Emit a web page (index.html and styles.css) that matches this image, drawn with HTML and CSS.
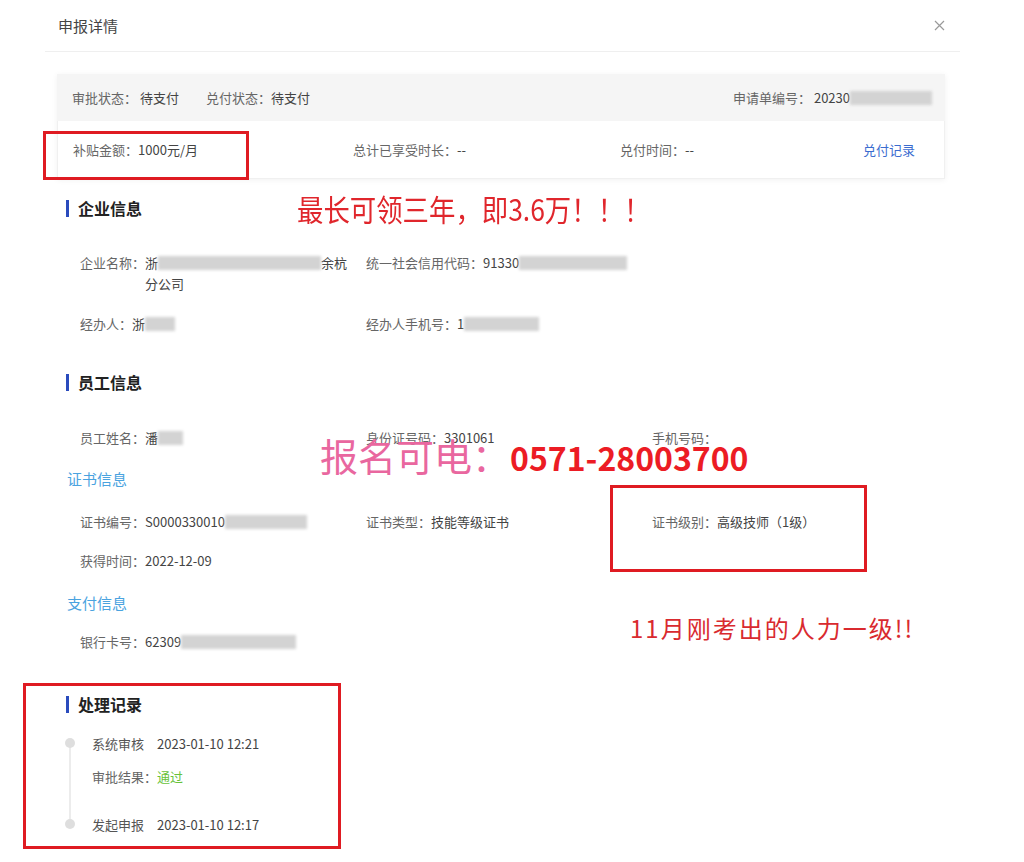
FILE: index.html
```html
<!DOCTYPE html>
<html lang="zh-CN">
<head>
  <meta charset="UTF-8" />
  <title>申报详情</title>
  <link rel="stylesheet" href="styles.css">
</head>
<body>
  <div class="dialog">
    <div class="dialog-header">
      <span class="dialog-title">申报详情</span>
      <svg class="close" width="11" height="11" viewBox="0 0 11 11"><path d="M1 1L10 10M10 1L1 10" stroke="#9a9a9a" stroke-width="1.2" fill="none"/></svg>
    </div>

    <div class="summary">
      <div class="summary-top">
        <span class="item"><span class="label">审批状态<i class="colon">：</i> </span><span class="value">待支付</span></span>
        <span class="item pay-state"><span class="label">兑付状态<i class="colon">：</i></span><span class="value">待支付</span></span>
        <span class="item order-no"><span class="label">申请单编号<i class="colon">：</i> </span><span class="value">20230<span class="mask mask-82"></span></span></span>
      </div>
      <div class="summary-bottom">
        <span class="item"><span class="label">补贴金额<i class="colon">：</i></span><span class="value">1000元/月</span></span>
        <span class="item"><span class="label">总计已享受时长<i class="colon">：</i></span><span class="value">--</span></span>
        <span class="item"><span class="label">兑付时间<i class="colon">：</i></span><span class="value">--</span></span>
        <a class="link">兑付记录</a>
      </div>
    </div>

    <div class="section">
      <h2 class="section-title t-company">企业信息</h2>
      <div class="row r-name">
        <div class="cell"><span class="label">企业名称<i class="colon">：</i></span><span class="value">浙<span class="mask mask-163"></span>余杭<br>分公司</span></div>
        <div class="cell"><span class="label">统一社会信用代码<i class="colon">：</i></span><span class="value">91330<span class="mask mask-108"></span></span></div>
      </div>
      <div class="row r-agent">
        <div class="cell"><span class="label">经办人<i class="colon">：</i></span><span class="value">浙<span class="mask mask-30"></span></span></div>
        <div class="cell"><span class="label">经办人手机号<i class="colon">：</i></span><span class="value">1<span class="mask mask-75"></span></span></div>
      </div>

      <h2 class="section-title t-employee">员工信息</h2>
      <div class="row r-emp">
        <div class="cell"><span class="label">员工姓名<i class="colon">：</i></span><span class="value">潘<span class="mask mask-25"></span></span></div>
        <div class="cell"><span class="label">身份证号码<i class="colon">：</i></span><span class="value">3301061</span></div>
        <div class="cell"><span class="label">手机号码<i class="colon">：</i></span></div>
      </div>

      <h3 class="sub-title s-cert">证书信息</h3>
      <div class="row r-cert">
        <div class="cell"><span class="label">证书编号<i class="colon">：</i></span><span class="value">S0000330010<span class="mask mask-82"></span></span></div>
        <div class="cell"><span class="label">证书类型<i class="colon">：</i></span><span class="value">技能等级证书</span></div>
        <div class="cell"><span class="label">证书级别<i class="colon">：</i></span><span class="value">高级技师（1级）</span></div>
      </div>
      <div class="row r-date">
        <div class="cell"><span class="label">获得时间<i class="colon">：</i></span><span class="value">2022-12-09</span></div>
      </div>

      <h3 class="sub-title s-pay">支付信息</h3>
      <div class="row r-bank">
        <div class="cell"><span class="label">银行卡号<i class="colon">：</i></span><span class="value">62309<span class="mask mask-115"></span></span></div>
      </div>

      <h2 class="section-title t-process">处理记录</h2>
      <div class="timeline">
        <div class="tl-item first">
          <span class="tl-name">系统审核</span><span class="tl-time">2023-01-10 12:21</span>
        </div>
        <div class="tl-result">
          <span class="label">审批结果<i class="colon">：</i></span><span class="pass">通过</span>
        </div>
        <div class="tl-item last">
          <span class="tl-name">发起申报</span><span class="tl-time">2023-01-10 12:17</span>
        </div>
      </div>
    </div>
  </div>

  <!-- annotations drawn over the screenshot -->
  <div class="mark mark-amount"></div>
  <div class="mark mark-level"></div>
  <div class="mark mark-record"></div>
  <div class="note note-top">最长可领三年，即3.6万！！！</div>
  <div class="note note-phone"><span class="pink">报名可电：</span><span class="tel">0571-28003700</span></div>
  <div class="note note-level">11月刚考出的人力一级!!</div>
</body>
</html>
```

FILE: styles.css
```css
* {
  box-sizing: border-box;
}

html, body {
  margin: 0;
  padding: 0;
  background: #fff;
}

body {
  font-family: "Noto Sans CJK SC", "Liberation Sans", sans-serif;
  font-size: 13px;
  color: #555;
  width: 1024px;
  height: 862px;
  overflow: hidden;
}

.dialog {
  margin-left: 45px;
  width: 915px;
}

.dialog-header {
  height: 52px;
  display: flex;
  align-items: center;
  justify-content: space-between;
  padding: 0 15px 0 13px;
  border-bottom: 1px solid #efefef;
}

.dialog-title {
  font-size: 15px;
  color: #444;
}

.label {
  color: #666;
  white-space: nowrap;
}

/* centred full-width colon, as in the original UI font */
.colon {
  font-style: normal;
  font-family: "Noto Sans CJK TC", "Noto Sans CJK SC", sans-serif;
}

.value {
  color: #444;
}

.mask {
  display: inline-block;
  height: 14px;
  vertical-align: -2px;
  background: #d3d3d3;
  filter: blur(1.5px);
}

.mask-25 { width: 25px; }
.mask-30 { width: 30px; }
.mask-75 { width: 75px; }
.mask-82 { width: 82px; }
.mask-108 { width: 108px; }
.mask-115 { width: 115px; }
.mask-163 { width: 163px; }

/* summary panel */
.summary {
  margin: 22px 0 0 12px;
  width: 888px;
  box-shadow: 0 1px 6px rgba(0, 0, 0, 0.06);
}

.summary-top {
  height: 47px;
  display: flex;
  align-items: center;
  padding: 0 13px 0 15px;
  background: #f5f5f5;
}

.pay-state {
  margin-left: 27px;
}

.order-no {
  margin-left: auto;
}

.summary-bottom {
  height: 58px;
  display: grid;
  grid-template-columns: 280px 267px 243px auto;
  align-items: center;
  padding-left: 15px;
  border: 1px solid #f0f0f0;
  border-top: none;
}

.link {
  color: #3b6ccf;
  cursor: pointer;
}

/* sections */
.section {
  padding-left: 21px;
}

.section-title {
  margin: 0;
  font-size: 16px;
  font-weight: bold;
  color: #222;
  line-height: 17px;
  border-left: 3px solid #2a4bbd;
  padding-left: 9px;
}

.sub-title {
  margin: 0;
  padding-left: 1px;
  font-size: 15px;
  font-weight: normal;
  color: #4aa3df;
  line-height: 21px;
}

.row {
  display: grid;
  grid-template-columns: 286px 286px auto;
  padding-left: 14px;
  line-height: 21px;
}

.cell {
  display: flex;
}

.t-company { margin-top: 21px; }
.r-name { margin-top: 35px; }
.r-agent { margin-top: 19px; }
.t-employee { margin-top: 40px; }
.r-emp { margin-top: 36px; }
.s-cert { margin-top: 20px; }
.r-cert { margin-top: 22px; }
.r-date { margin-top: 18px; }
.s-pay { margin-top: 21px; }
.r-bank { margin-top: 18px; }
.t-process { margin-top: 44px; }

/* timeline */
.timeline {
  position: relative;
  margin-top: 20px;
  padding-left: 26px;
  line-height: 21px;
}

.timeline::before {
  content: "";
  position: absolute;
  left: 3px;
  top: 10px;
  height: 81px;
  width: 2px;
  background: #ececec;
}

.tl-item {
  position: relative;
  display: flex;
  gap: 13px;
}

.tl-item::before {
  content: "";
  position: absolute;
  left: -27px;
  top: 5px;
  width: 10px;
  height: 10px;
  border-radius: 50%;
  background: #dedede;
}

.tl-name {
  color: #555;
}

.tl-time {
  color: #444;
}

.tl-result {
  margin-top: 12px;
}

.pass {
  color: #67c23a;
}

.tl-item.last {
  margin-top: 27px;
}

/* annotations */
.mark {
  position: absolute;
  border: 3px solid #df1b22;
}

.mark-amount {
  left: 43px;
  top: 131px;
  width: 206px;
  height: 49px;
}

.mark-level {
  left: 610px;
  top: 485px;
  width: 257px;
  height: 87px;
}

.mark-record {
  left: 23px;
  top: 683px;
  width: 318px;
  height: 166px;
}

.note {
  position: absolute;
  white-space: nowrap;
}

.note-top {
  left: 297px;
  top: 193px;
  font-size: 30px;
  line-height: 30px;
  color: #e0262c;
  transform: scaleX(0.88);
  transform-origin: left top;
}

.note-phone {
  left: 320px;
  top: 436px;
  display: flex;
  align-items: baseline;
  line-height: 38px;
}

.pink {
  font-size: 38px;
  color: #e9679f;
}

.tel {
  font-size: 32px;
  font-weight: bold;
  color: #ec1c24;
}

.note-level {
  left: 630px;
  top: 616px;
  font-size: 24px;
  line-height: 24px;
  letter-spacing: 2px;
  color: #d92a2f;
}
```
